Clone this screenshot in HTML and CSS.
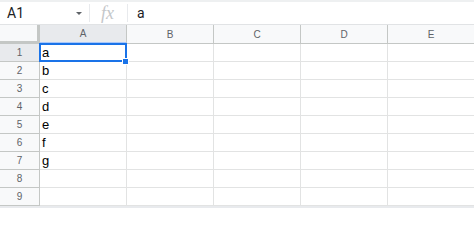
FILE: index.html
```html
<!DOCTYPE html>
<html>
<head>
<meta charset="utf-8">
<link rel="stylesheet" href="styles.css">
</head>
<body>
<div class="app">
  <div class="fbar">
    <div class="namebox"><span class="ref">A1</span><span class="caret"></span></div>
    <div class="sep"></div>
    <div class="fx">fx</div>
    <div class="sep"></div>
    <div class="finput">a</div>
  </div>
  <div class="grid">
    <div class="corner"></div>
    <div class="ch sel-h">A</div>
    <div class="ch">B</div>
    <div class="ch">C</div>
    <div class="ch">D</div>
    <div class="ch">E</div>

    <div class="rh sel-r">1</div><div class="c">a</div><div class="c"></div><div class="c"></div><div class="c"></div><div class="c"></div>
    <div class="rh">2</div><div class="c">b</div><div class="c"></div><div class="c"></div><div class="c"></div><div class="c"></div>
    <div class="rh">3</div><div class="c">c</div><div class="c"></div><div class="c"></div><div class="c"></div><div class="c"></div>
    <div class="rh">4</div><div class="c">d</div><div class="c"></div><div class="c"></div><div class="c"></div><div class="c"></div>
    <div class="rh">5</div><div class="c">e</div><div class="c"></div><div class="c"></div><div class="c"></div><div class="c"></div>
    <div class="rh">6</div><div class="c">f</div><div class="c"></div><div class="c"></div><div class="c"></div><div class="c"></div>
    <div class="rh">7</div><div class="c">g</div><div class="c"></div><div class="c"></div><div class="c"></div><div class="c"></div>
    <div class="rh">8</div><div class="c"></div><div class="c"></div><div class="c"></div><div class="c"></div><div class="c"></div>
    <div class="rh">9</div><div class="c"></div><div class="c"></div><div class="c"></div><div class="c"></div><div class="c"></div>

    <div class="selection"></div>
    <div class="handle"></div>
  </div>
  <div class="bottom"></div>
</div>
</body>
</html>
```
FILE: styles.css
```css
* { box-sizing: border-box; }
html, body { margin: 0; padding: 0; background: #fff; }
body { width: 474px; height: 208px; overflow: hidden; font-family: "Liberation Sans", Arial, sans-serif; }
.app { width: 474px; height: 208px; overflow: hidden; }

.fbar {
  height: 25px;
  border-top: 2px solid #eef0f1;
  border-bottom: 1px solid #e1e3e5;
  display: flex;
  align-items: center;
}
.namebox {
  width: 89px;
  height: 22px;
  display: flex;
  align-items: center;
  justify-content: space-between;
  padding: 0 5px 0 7px;
}
.ref { font-family: Roboto, "Liberation Sans", sans-serif; font-size: 14px; color: #202124; }
.caret {
  width: 0; height: 0;
  border-left: 3px solid transparent;
  border-right: 3px solid transparent;
  border-top: 3px solid #5f6368;
  margin-right: 2px;
}
.sep { width: 1px; height: 18px; background: #e8eaed; }
.fx {
  width: 37px;
  text-align: center;
  font-family: "Liberation Serif", serif;
  font-style: italic;
  font-size: 18px;
  color: #c4c7ca;
  line-height: 20px;
  padding-right: 2px;
}
.finput { padding-left: 9px; font-family: Roboto, "Liberation Sans", sans-serif; font-size: 14px; color: #202124; }

.grid {
  position: relative;
  display: grid;
  grid-template-columns: 40px repeat(5, 87px);
  grid-template-rows: 19px repeat(9, 18px);
  width: 475px;
}
.corner {
  background: #f8f9fa;
  border-right: 3px solid #c4c7c5;
  border-bottom: 3px solid #c4c7c5;
}
.ch {
  background: #f8f9fa;
  border-right: 1px solid #c4c7c5;
  border-bottom: 1px solid #c4c7c5;
  font-size: 10px;
  color: #5f6368;
  display: flex;
  align-items: center;
  justify-content: center;
}
.ch.sel-h { background: #e8eaed; border-bottom: 2px solid #a8c7fa; }
.rh {
  background: #f8f9fa;
  border-right: 1px solid #c4c7c5;
  border-bottom: 1px solid #c4c7c5;
  font-size: 10px;
  color: #5f6368;
  display: flex;
  align-items: center;
  justify-content: center;
}
.rh.sel-r { background: #e8eaed; }
.c {
  border-right: 1px solid #e2e3e3;
  border-bottom: 1px solid #e2e3e3;
  font-size: 13px;
  color: #000;
  padding-left: 2px;
  line-height: 17px;
}
.selection {
  position: absolute;
  left: 39px;
  top: 18px;
  width: 88px;
  height: 19px;
  border: 2px solid #1a73e8;
}
.handle {
  position: absolute;
  left: 122px;
  top: 33px;
  width: 7px;
  height: 7px;
  background: #1a73e8;
  border: 1px solid #fff;
}
.bottom { height: 2px; background: #e8eaed; }
```
